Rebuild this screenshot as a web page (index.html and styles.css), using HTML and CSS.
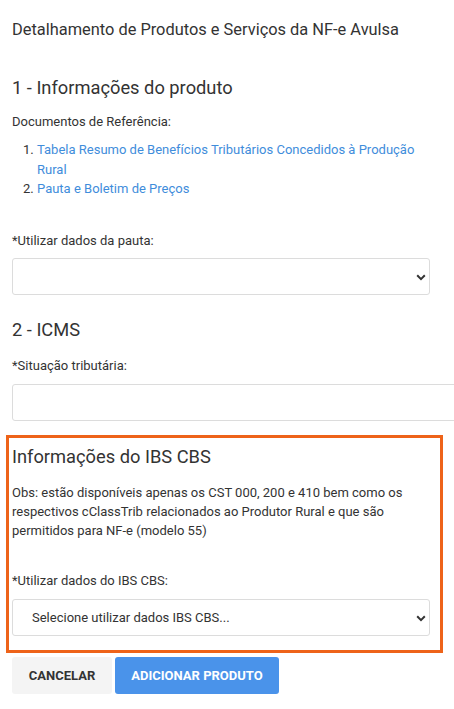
FILE: index.html
```html
<!DOCTYPE html>
<html lang="pt-BR">
<head>
  <meta charset="UTF-8" />
  <title>NF-e Avulsa</title>
  <link rel="stylesheet" href="styles.css">
</head>
<body>
  <div class="page">
    <p class="page-title">Detalhamento de Produtos e Serviços da NF-e Avulsa</p>

    <h2 class="section-title">1 - Informações do produto</h2>
    <p class="docs">Documentos de Referência:</p>
    <ol class="doc-list">
      <li><a href="#">Tabela Resumo de Benefícios Tributários Concedidos à Produção Rural</a></li>
      <li><a href="#">Pauta e Boletim de Preços</a></li>
    </ol>

    <label class="field-label first">*Utilizar dados da pauta:</label>
    <div class="select-wrap">
      <select class="select"><option></option></select>
      <svg class="chevron" width="10" height="7" viewBox="0 0 10 7"><path d="M1.2 1.3 L5 5.1 L8.8 1.3" fill="none" stroke="#333" stroke-width="2"/></svg>
    </div>

    <h2 class="section-title icms">2 - ICMS</h2>
    <label class="field-label">*Situação tributária:</label>
    <input class="input wide" type="text">

    <!-- IBS CBS -->
    <div class="ibs-box">
      <h2 class="section-title">Informações do IBS CBS</h2>
      <p class="obs">Obs: estão disponíveis apenas os CST 000, 200 e 410 bem como os respectivos cClassTrib relacionados ao Produtor Rural e que são permitidos para NF-e (modelo 55)</p>

      <label class="field-label first">*Utilizar dados do IBS CBS:</label>
      <div class="select-wrap">
        <select class="select"><option>Selecione utilizar dados IBS CBS...</option></select>
        <svg class="chevron" width="10" height="7" viewBox="0 0 10 7"><path d="M1.2 1.3 L5 5.1 L8.8 1.3" fill="none" stroke="#333" stroke-width="2"/></svg>
      </div>
    </div>

    <div class="actions">
      <button class="btn btn-cancel">Cancelar</button>
      <button class="btn btn-primary">Adicionar produto</button>
    </div>
  </div>
</body>
</html>
```

FILE: styles.css
```css
html, body {
  margin: 0;
  padding: 0;
  background: #fff;
  font-family: Roboto, 'Noto Sans', sans-serif;
  color: #333;
  overflow: hidden;
}

.page {
  padding: 20px 0 16px 12px;
  overflow: hidden;
}

.page-title {
  margin: 0;
  font-size: 16.4px;
  line-height: 20px;
}

.section-title {
  margin: 36px 0 0;
  font-size: 18.3px;
  font-weight: 400;
  line-height: 24px;
}

.section-title.icms {
  margin-top: 23px;
}

.docs {
  margin: 12px 0 0;
  font-size: 13px;
  line-height: 19px;
}

.doc-list {
  margin: 9px 0 0;
  padding-left: 25px;
  font-size: 13px;
  line-height: 19.5px;
  width: 400px;
}

.doc-list a {
  color: #3f8ddb;
  text-decoration: none;
}

.field-label {
  display: block;
  margin-top: 13.5px;
  font-size: 13px;
  line-height: 19px;
}

.field-label.first {
  margin-top: 32px;
}

.select-wrap {
  position: relative;
  width: 418px;
  margin-top: 8.5px;
}

.select {
  display: block;
  width: 100%;
  height: 37px;
  box-sizing: border-box;
  border: 1px solid #dcdcdc;
  border-radius: 3px;
  background: #fff;
  padding: 0 0 0 19px;
  font-family: inherit;
  font-size: 13px;
  color: #333;
  appearance: none;
  -webkit-appearance: none;
}

.chevron {
  position: absolute;
  right: 4px;
  top: 16px;
}

.input {
  display: block;
  margin-top: 9.5px;
  height: 37px;
  box-sizing: border-box;
  border: 1px solid #dcdcdc;
  border-radius: 3px;
  font-family: inherit;
}

.input.wide {
  width: 448px;
}

.ibs-box {
  margin: 14px 0 0 -6px;
  width: 437px;
  box-sizing: border-box;
  border: 3px solid #ee6319;
  padding: 7px 10px 14px 3px;
}

.ibs-box .section-title {
  margin-top: 0;
}

.obs {
  margin: 13.5px 0 0;
  font-size: 13px;
  line-height: 19px;
  padding-right: 20px;
}

.ibs-box .field-label.first {
  margin-top: 31px;
}

.ibs-box .select-wrap {
  margin-top: 9.5px;
}

.actions {
  display: flex;
  gap: 3px;
  margin-top: 4px;
}

.btn {
  height: 37px;
  border: none;
  border-radius: 3px;
  font-family: inherit;
  font-size: 13px;
  font-weight: 700;
  text-transform: uppercase;
}

.btn-cancel {
  width: 100px;
  background: #f4f4f4;
  color: #333;
}

.btn-primary {
  width: 164px;
  background: #4a93ea;
  color: #fff;
}
```
